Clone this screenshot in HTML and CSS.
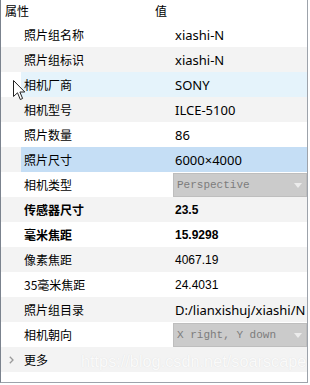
FILE: index.html
```html
<!DOCTYPE html>
<html lang="zh-CN">
<head>
    <meta charset="UTF-8">
    <title>属性浏览器</title>
    <link rel="stylesheet" href="styles.css">
</head>
<body>
    <div class="browser">
        <div class="header">
            <div class="head-name">属性</div>
            <div class="head-value">值</div>
        </div>

        <div class="rows">
            <div class="row">
                <div class="indent"></div>
                <div class="name">照片组名称</div>
                <div class="value">xiashi-N</div>
            </div>
            <div class="row alt">
                <div class="indent"></div>
                <div class="name">照片组标识</div>
                <div class="value">xiashi-N</div>
            </div>
            <div class="row hover">
                <div class="indent"></div>
                <div class="name">相机厂商</div>
                <div class="value">SONY</div>
            </div>
            <div class="row alt">
                <div class="indent"></div>
                <div class="name">相机型号</div>
                <div class="value">ILCE-5100</div>
            </div>
            <div class="row">
                <div class="indent"></div>
                <div class="name">照片数量</div>
                <div class="value">86</div>
            </div>
            <div class="row alt selected">
                <div class="indent"></div>
                <div class="name">照片尺寸</div>
                <div class="value">6000×4000</div>
            </div>
            <div class="row">
                <div class="indent"></div>
                <div class="name">相机类型</div>
                <div class="value combo-cell">
                    <div class="combo">
                        <span>Perspective</span>
                        <svg class="arrow" width="8" height="5" viewBox="0 0 8 5"><polygon points="0,0 8,0 4,5" /></svg>
                    </div>
                </div>
            </div>
            <div class="row alt">
                <div class="indent"></div>
                <div class="name small bold">传感器尺寸</div>
                <div class="value small bold">23.5</div>
            </div>
            <div class="row">
                <div class="indent"></div>
                <div class="name small bold">毫米焦距</div>
                <div class="value small bold">15.9298</div>
            </div>
            <div class="row alt">
                <div class="indent"></div>
                <div class="name small">像素焦距</div>
                <div class="value small">4067.19</div>
            </div>
            <div class="row">
                <div class="indent"></div>
                <div class="name small">35毫米焦距</div>
                <div class="value small">24.4031</div>
            </div>
            <div class="row alt">
                <div class="indent"></div>
                <div class="name">照片组目录</div>
                <div class="value">D:/lianxishuj/xiashi/N</div>
            </div>
            <div class="row">
                <div class="indent"></div>
                <div class="name">相机朝向</div>
                <div class="value combo-cell">
                    <div class="combo">
                        <span>X right, Y down</span>
                        <svg class="arrow" width="8" height="5" viewBox="0 0 8 5"><polygon points="0,0 8,0 4,5" /></svg>
                    </div>
                </div>
            </div>
            <div class="row alt group">
                <div class="indent">
                    <svg class="chevron" width="5" height="8" viewBox="0 0 5 8"><polyline points="0.8,0.8 4,4 0.8,7.2" /></svg>
                </div>
                <div class="name">更多</div>
                <div class="value"></div>
            </div>
        </div>

        <!-- 水印 -->
        <div class="watermark">https://blog.csdn.net/soarscape</div>

        <!-- 鼠标指针 -->
        <svg class="cursor" width="13" height="21" viewBox="0 0 13 21">
            <polygon points="0.5,0.5 0.5,16.5 4.5,12.8 7.3,19.5 9.6,18.5 6.9,12 11.8,12" />
        </svg>
    </div>
</body>
</html>
```

FILE: styles.css
```css
* {
    box-sizing: border-box;
}

body {
    margin: 0;
    background-color: white;
    font-family: "Noto Sans CJK SC", sans-serif;
    font-size: 12px;
    color: #000;
}

.browser {
    position: relative;
    width: 308px;
    height: 383px;
    border-left: 1px solid #7b838e;
    border-right: 1px solid #9da3ab;
    border-bottom: 1px solid #9da3ab;
    background-color: white;
    overflow: hidden;
}

.header {
    display: flex;
    height: 22px;
    align-items: center;
    line-height: 14px;
}

.head-name {
    width: 154px;
    padding-left: 4px;
}

.head-value {
    flex: 1;
}

.row {
    display: grid;
    grid-template-columns: 20px 133px 1fr;
    height: 25px;
    background-color: white;
}

.row.alt {
    background-color: #f3f3f3;
}

.indent {
    display: flex;
    align-items: center;
    justify-content: center;
}

.name,
.value {
    display: flex;
    align-items: center;
    line-height: 14px;
    white-space: nowrap;
    overflow: hidden;
}

.name {
    padding-left: 3px;
}

.value {
    padding-left: 21px;
    font-family: "Noto Sans", "Noto Sans CJK SC", sans-serif;
    font-size: 13px;
}

.row.hover .name,
.row.hover .value {
    background-color: #e5f3fb;
}

.row.selected .name,
.row.selected .value {
    background-color: #c5def5;
}

.small {
    font-family: "Liberation Sans", "Noto Sans CJK SC", sans-serif;
    font-size: 12px;
}

.name.small {
    font-family: "Noto Sans CJK SC", sans-serif;
}

.bold {
    font-weight: bold;
}

.combo-cell {
    padding: 1px 0 0 19px;
    align-items: stretch;
}

.combo {
    flex: 1;
    display: flex;
    align-items: center;
    justify-content: space-between;
    padding: 0 4px 0 3px;
    background-color: #cbcbcb;
    border: 1px solid #bebebe;
    font-family: "Liberation Mono", monospace;
    font-size: 11px;
    color: #7c7c7c;
}

.arrow polygon {
    fill: #ececec;
}

.chevron polyline {
    fill: none;
    stroke: #9a9a9a;
    stroke-width: 1.3;
}

.watermark {
    position: absolute;
    left: 80px;
    top: 352px;
    font-family: "Liberation Sans", sans-serif;
    font-size: 16.3px;
    color: #fafafa;
    text-shadow: 0 0 1px #dcdcdc;
    white-space: nowrap;
}

.cursor {
    position: absolute;
    left: 12px;
    top: 80px;
}

.cursor polygon {
    fill: white;
    stroke: #222;
    stroke-width: 1;
    stroke-linejoin: miter;
}
```
